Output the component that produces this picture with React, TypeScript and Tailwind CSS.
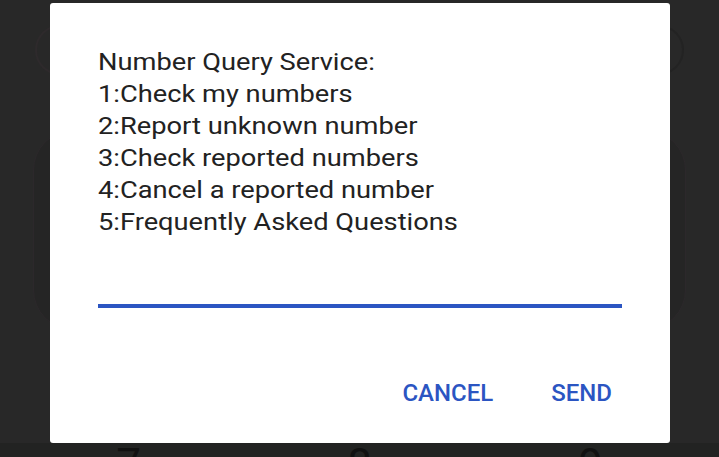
import React from "react";

export default function App() {
  return (
    <div
      className="relative w-[719px] h-[457px] overflow-hidden bg-[#282828]"
      style={{ fontFamily: "Roboto, 'Liberation Sans', sans-serif" }}
    >
      {/* background app (dimmed) */}
      <div className="flex flex-col h-full">
        <div className="flex justify-between px-[35px] pt-[25px] h-[130px]">
          <div className="w-[50px] h-[50px] rounded-full border-2 border-[#2e2a2c]" />
          <div className="w-[50px] h-[50px] rounded-full border-2 border-[#232323]" />
        </div>
        <div className="mx-[33px] h-[200px] rounded-[40px] bg-[#252525] border border-[#2c282b]" />
        <div className="flex-1" />
        <div className="grid grid-cols-3 px-[13px] h-[14px] bg-[#222322] text-[44px] leading-[44px] text-[#111] overflow-hidden text-center">
          <span>7</span>
          <span>8</span>
          <span>9</span>
        </div>
      </div>

      {/* dialog */}
      <div className="absolute left-[50px] top-[3px] w-[620px] h-[440px] bg-white rounded-[3px] flex flex-col px-[48px] pt-[43px]">
        <div className="text-[24px] leading-[32px] text-[#222222] scale-x-[1.136] origin-left">
          <div>Number Query Service:</div>
          <div>1:Check my numbers</div>
          <div>2:Report unknown number</div>
          <div>3:Check reported numbers</div>
          <div>4:Cancel a reported number</div>
          <div>5:Frequently Asked Questions</div>
        </div>
        <div className="mt-[66px] h-[4px] bg-[#2b55c2]" />
        <div className="flex justify-end gap-[58px] mt-[71px] pr-[10px]">
          <span className="text-[24px] leading-[28px] font-medium text-[#2b55c2]">CANCEL</span>
          <span className="text-[24px] leading-[28px] font-medium text-[#2b55c2]">SEND</span>
        </div>
      </div>
    </div>
  );
}
